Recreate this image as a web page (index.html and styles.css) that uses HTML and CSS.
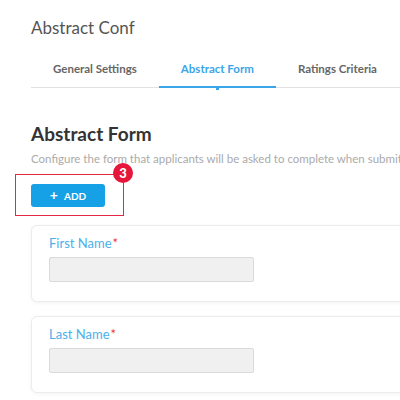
FILE: index.html
```html
<!DOCTYPE html>
<html>
<head>
<meta charset="utf-8">
<link rel="stylesheet" href="styles.css">
</head>
<body>
<div class="page">
  <h1 class="app-title">Abstract Conf</h1>
  <nav class="tabs">
    <div class="tab">General Settings</div>
    <div class="tab active">Abstract Form</div>
    <div class="tab">Ratings Criteria</div>
  </nav>
  <h2 class="section-title">Abstract Form</h2>
  <p class="section-desc">Configure the form that applicants will be asked to complete when submitting an abstract.</p>
  <div class="add-wrap">
    <button class="btn-add"><span class="plus">+</span>ADD</button>
    <div class="highlight"></div>
    <div class="badge">3</div>
  </div>
  <div class="card">
    <label class="field-label">First Name<span class="req">*</span></label>
    <div class="input"></div>
  </div>
  <div class="card">
    <label class="field-label">Last Name<span class="req">*</span></label>
    <div class="input"></div>
  </div>
</div>
</body>
</html>
```
FILE: styles.css
```css
html, body {
  margin: 0;
  padding: 0;
  background: #fff;
  overflow: hidden;
}
body {
  font-family: Lato, "Noto Sans", sans-serif;
  width: 400px;
  height: 400px;
}
.page {
  padding: 17px 0 0 31px;
  width: 600px;
}
.app-title {
  margin: 0;
  font-size: 17px;
  font-weight: 400;
  color: #555;
  line-height: 22px;
}
.tabs {
  display: flex;
  margin-top: 16px;
  border-bottom: 1px solid #e2e2e2;
  width: 400px;
}
.tab {
  position: relative;
  padding: 7px 22px 11px;
  font-size: 11.5px;
  font-weight: 700;
  color: #666;
  line-height: 14px;
}
.tab.active {
  color: #3ba5ea;
}
.tab.active::after {
  content: "";
  position: absolute;
  left: 0;
  right: 0;
  bottom: -1px;
  height: 2px;
  background: #3ba5ea;
}
.tab.active::before {
  content: "";
  position: absolute;
  left: 50%;
  bottom: -3px;
  width: 3px;
  height: 3px;
  margin-left: -1px;
  background: #3ba5ea;
}
.section-title {
  margin: 34px 0 0;
  font-size: 19px;
  font-weight: 700;
  color: #333;
  line-height: 24px;
}
.section-desc {
  margin: 5px 0 0;
  font-size: 11.5px;
  color: #aaa;
  white-space: nowrap;
  line-height: 16px;
}
.add-wrap {
  position: relative;
  margin-top: 17px;
  width: 74px;
}
.btn-add {
  display: flex;
  align-items: center;
  justify-content: center;
  width: 74px;
  height: 23px;
  border: 0;
  border-radius: 3px;
  background: #16a0e6;
  color: #fff;
  font-family: Lato, "Noto Sans", sans-serif;
  font-size: 10px;
  font-weight: 700;
  padding: 0;
}
.plus {
  font-size: 14px;
  font-weight: 700;
  margin-right: 6px;
  line-height: 14px;
  margin-top: -2px;
}
.highlight {
  position: absolute;
  left: -16px;
  top: -10px;
  width: 107px;
  height: 40px;
  border: 1px solid #e22a44;
}
.badge {
  position: absolute;
  left: 82px;
  top: -21px;
  width: 20px;
  height: 20px;
  border-radius: 50%;
  background: #e6163b;
  color: #fff;
  font-size: 13px;
  font-weight: 900;
  line-height: 20px;
  text-align: center;
}
.card {
  margin-top: 18px;
  width: 420px;
  box-sizing: border-box;
  padding: 9px 17px 19px;
  border: 1px solid #ececec;
  border-radius: 6px;
  box-shadow: 0 1px 4px rgba(0,0,0,0.05);
  background: #fff;
}
.card + .card {
  margin-top: 14px;
}
.field-label {
  display: block;
  font-size: 13px;
  color: #4cb0ea;
  line-height: 16px;
}
.req {
  color: #f0304a;
  margin-left: 1px;
}
.input {
  margin-top: 6px;
  width: 205px;
  height: 25px;
  box-sizing: border-box;
  border: 1px solid #dadada;
  border-radius: 2px;
  background: #f0f0f0;
}
```
